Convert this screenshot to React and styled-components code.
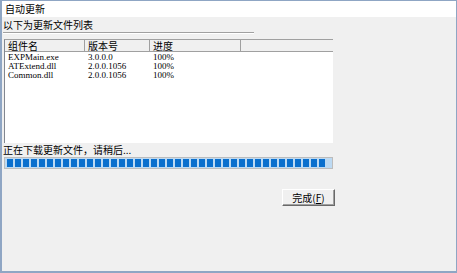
import styled, { createGlobalStyle } from "styled-components";

const Global = createGlobalStyle`
  html, body { margin: 0; padding: 0; background: #f0f0f0; }
  * { box-sizing: border-box; }
`;

const Window = styled.div`
  width: 457px;
  height: 273px;
  border: 1px solid #8fa6c4;
  border-left-width: 2px;
  border-bottom-width: 2px;
  background: #f0f0f0;
  font-family: "Noto Sans CJK SC", "Liberation Sans", sans-serif;
  font-size: 10px;
  color: #000;
  display: flex;
  flex-direction: column;
`;

const TitleBar = styled.div`
  height: 16px;
  background: #fff;
  padding: 1px 0 0 3px;
  line-height: 14px;
  font-size: 10px;
`;

const Body = styled.div`
  flex: 1;
  padding: 2px 0 0 1px;
  display: flex;
  flex-direction: column;
`;

const Label = styled.div`
  height: 12px;
  line-height: 12px;
  font-size: 10px;
`;

const Separator = styled.div`
  width: 251px;
  height: 2px;
  margin-top: 1px;
  border-top: 1px solid #a0a0a0;
  border-bottom: 1px solid #fff;
`;

const List = styled.div`
  margin: 5px 0 0 1px;
  width: 329px;
  height: 104px;
  background: #fff;
  border-left: 1px solid #828790;
  border-top: 1px solid #a0a0a0;
`;

const Row = styled.div`
  display: grid;
  grid-template-columns: 80px 65px 91px 1fr;
  height: ${p => (p.$head ? "12px" : "9px")};
  line-height: ${p => (p.$head ? "11px" : "9px")};
  font-family: ${p => (p.$head ? `"Noto Sans CJK SC", sans-serif` : `"Liberation Serif", serif`)};
  font-size: ${p => (p.$head ? "10px" : "9px")};
  background: ${p => (p.$head ? "#f0f0f0" : "#fff")};
  border-bottom: ${p => (p.$head ? "1px solid #a0a0a0" : "none")};
  margin-bottom: ${p => (p.$head ? "1px" : "0")};
`;

const Cell = styled.div`
  padding-left: 3px;
  white-space: nowrap;
  overflow: ${p => (p.$head ? "visible" : "hidden")};
  border-right: ${p => (p.$head ? "1px solid #a0a0a0" : "none")};
`;

const Status = styled.div`
  margin-top: 1px;
  height: 12px;
  line-height: 12px;
  font-size: 10px;
`;

const Progress = styled.div`
  margin: 1px 0 0 1px;
  width: 329px;
  height: 12px;
  background: #bcd9f2;
  border: 1px solid #bcbcbc;
  padding: 1px 2px;
  display: flex;
  gap: 2px;
`;

const Block = styled.div`
  width: 6px;
  height: 100%;
  background: #0a6fcd;
`;

const Footer = styled.div`
  display: flex;
  padding: 20px 0 0 279px;
`;

const Button = styled.button`
  width: 53px;
  height: 17px;
  padding: 0;
  font-family: "Noto Sans CJK SC", sans-serif;
  font-size: 10px;
  line-height: 14px;
  background: #f0f0f0;
  border: 1px solid;
  border-color: #fff #696969 #696969 #fff;
  box-shadow: inset -1px -1px 0 #a0a0a0;
  color: #000;
`;

const files = [
  ["EXPMain.exe", "3.0.0.0", "100%"],
  ["ATExtend.dll", "2.0.0.1056", "100%"],
  ["Common.dll", "2.0.0.1056", "100%"],
];

export default function App() {
  return (
    <>
      <Global />
      <Window>
        <TitleBar>自动更新</TitleBar>
        <Body>
          <Label>以下为更新文件列表</Label>
          <Separator />
          <List>
            <Row $head>
              <Cell $head>组件名</Cell>
              <Cell $head>版本号</Cell>
              <Cell $head>进度</Cell>
              <Cell />
            </Row>
            {files.map(f => (
              <Row key={f[0]}>
                <Cell>{f[0]}</Cell>
                <Cell>{f[1]}</Cell>
                <Cell>{f[2]}</Cell>
                <Cell />
              </Row>
            ))}
          </List>
          <Status>正在下载更新文件，请稍后...</Status>
          <Progress>
            {Array.from({ length: 40 }, (_, i) => (
              <Block key={i} />
            ))}
          </Progress>
          <Footer>
            <Button>完成(<u>F</u>)</Button>
          </Footer>
        </Body>
      </Window>
    </>
  );
}
